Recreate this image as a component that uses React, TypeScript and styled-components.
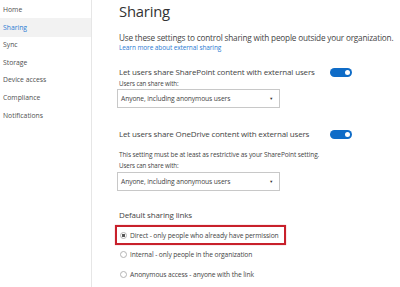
import React from "react"
import styled, { createGlobalStyle } from "styled-components"

const GlobalStyle = createGlobalStyle`
  html, body {
    margin: 0;
    padding: 0;
    background: #ffffff;
  }
  body {
    font-family: "Open Sans", "Noto Sans", sans-serif;
    color: #333333;
  }
`

const navItems = [
  "Home",
  "Sharing",
  "Sync",
  "Storage",
  "Device access",
  "Compliance",
  "Notifications",
]

const options = [
  "Direct - only people who already have permission",
  "Internal - only people in the organization",
  "Anonymous access - anyone with the link",
]

const App: React.FC = () => {
  return (
    <>
      <GlobalStyle />
      <Page>
        <Sidebar>
          {navItems.map((item) => (
            <NavItem key={item} $active={item === "Sharing"}>
              {item}
            </NavItem>
          ))}
        </Sidebar>
        <Main>
          <Title>Sharing</Title>
          <Intro>Use these settings to control sharing with people outside your organization.</Intro>
          <LearnLink>Learn more about external sharing</LearnLink>

          <Section $top={14}>
            <SettingRow>
              <SettingLabel>Let users share SharePoint content with external users</SettingLabel>
              <Toggle />
            </SettingRow>
            <SmallLabel $top={2}>Users can share with:</SmallLabel>
            <Select $top={1}>
              <span>Anyone, including anonymous users</span>
              <Caret>▼</Caret>
            </Select>
          </Section>

          <Section $top={20}>
            <SettingRow>
              <SettingLabel>Let users share OneDrive content with external users</SettingLabel>
              <Toggle />
            </SettingRow>
            <Note>This setting must be at least as restrictive as your SharePoint setting.</Note>
            <SmallLabel $top={3.5}>Users can share with:</SmallLabel>
            <Select $top={2}>
              <span>Anyone, including anonymous users</span>
              <Caret>▼</Caret>
            </Select>
          </Section>

          <Section $top={18}>
            <SettingLabel>Default sharing links</SettingLabel>
            <RadioList>
              {options.map((opt, i) => (
                <RadioRow key={opt} $highlight={i === 0}>
                  <Radio $checked={i === 0} />
                  <RadioText>{opt}</RadioText>
                </RadioRow>
              ))}
            </RadioList>
          </Section>
        </Main>
      </Page>
    </>
  )
}

const Page = styled.div`
  display: flex;
  width: 400px;
  height: 287px;
  overflow: hidden;
`

const Sidebar = styled.nav`
  width: 91px;
  flex-shrink: 0;
  border-right: 1px solid #e6e6e6;
  display: flex;
  flex-direction: column;
  padding-top: 1px;
`

const NavItem = styled.div<{ $active?: boolean }>`
  height: 17.6px;
  line-height: 17.6px;
  padding-left: 3px;
  font-size: 6.8px;
  color: ${(p) => (p.$active ? "#2b7cd3" : "#505050")};
  background: ${(p) => (p.$active ? "#f2f2f2" : "transparent")};
  box-shadow: ${(p) => (p.$active ? "0 -1px 0 #f2f2f2, 0 1px 0 #f2f2f2" : "none")};
`

const Main = styled.main`
  flex: 1;
  padding: 0 0 0 27px;
  display: flex;
  flex-direction: column;
`

const Title = styled.h1`
  margin: 0;
  font-size: 14.8px;
  font-weight: 400;
  line-height: 22px;
  color: #333333;
  letter-spacing: -0.2px;
`

const Intro = styled.p`
  margin: 10px 0 0;
  font-size: 8.2px;
  line-height: 11px;
  color: #444444;
  white-space: nowrap;
  letter-spacing: -0.18px;
`

const LearnLink = styled.a`
  font-size: 6.5px;
  line-height: 9px;
  color: #2b7cd3;
  letter-spacing: -0.1px;
`

const Section = styled.section<{ $top: number }>`
  margin-top: ${(p) => p.$top}px;
  display: flex;
  flex-direction: column;
`

const SettingRow = styled.div`
  display: flex;
  align-items: center;
  width: 233px;
  justify-content: space-between;
`

const SettingLabel = styled.div`
  font-size: 8px;
  line-height: 12px;
  color: #444444;
  letter-spacing: -0.15px;
  white-space: nowrap;
`

const Toggle = styled.div`
  position: relative;
  width: 22px;
  height: 9px;
  border-radius: 5px;
  background: #0f6cc7;
  &::after {
    content: "";
    position: absolute;
    right: 2.5px;
    top: 2px;
    width: 5px;
    height: 5px;
    border-radius: 50%;
    background: #ffffff;
  }
`

const SmallLabel = styled.div<{ $top: number }>`
  margin-top: ${(p) => p.$top}px;
  font-size: 6.2px;
  line-height: 8px;
  color: #444444;
  letter-spacing: -0.1px;
`

const Note = styled.div`
  margin-top: 9.5px;
  font-size: 6.5px;
  line-height: 9px;
  color: #444444;
  letter-spacing: -0.1px;
  white-space: nowrap;
`

const Select = styled.div<{ $top: number }>`
  margin-top: ${(p) => p.$top}px;
  margin-left: -2px;
  width: 163px;
  height: 19px;
  border: 1px solid #c8c8c8;
  display: flex;
  align-items: center;
  justify-content: space-between;
  padding: 0 6px 0 3px;
  box-sizing: border-box;
  font-size: 6.7px;
  color: #444444;
  letter-spacing: -0.1px;
`

const Caret = styled.span`
  font-size: 4px;
  color: #333333;
`

const RadioList = styled.div`
  display: flex;
  flex-direction: column;
  margin-top: 4px;
`

const RadioRow = styled.div<{ $highlight?: boolean }>`
  display: flex;
  align-items: center;
  gap: 3px;
  height: 20px;
  box-sizing: border-box;
  width: 171px;
  margin-left: -4px;
  padding-left: 3px;
  border: 2px solid ${(p) => (p.$highlight ? "#c8202b" : "transparent")};
  box-shadow: ${(p) => (p.$highlight ? "0 0 1px rgba(200,32,43,0.5)" : "none")};
  & + & {
    margin-top: -0.5px;
  }
`

const Radio = styled.span<{ $checked?: boolean }>`
  width: 5px;
  height: 5px;
  border-radius: 50%;
  border: 1px solid #b4b4b4;
  background: ${(p) => (p.$checked ? "radial-gradient(circle, #555 0 1.4px, #fff 1.8px)" : "#fff")};
  flex-shrink: 0;
`

const RadioText = styled.span`
  font-size: 6.7px;
  color: #444444;
  letter-spacing: -0.1px;
  white-space: nowrap;
`

export default App
